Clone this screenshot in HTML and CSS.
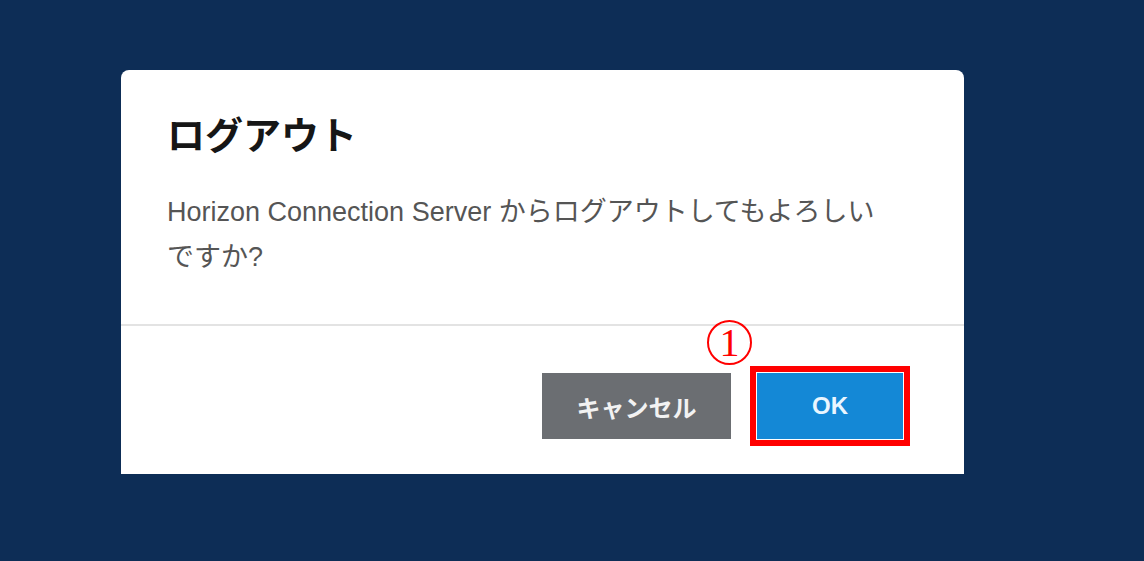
FILE: index.html
```html
<!DOCTYPE html>
<html lang="ja">
<head>
  <meta charset="UTF-8">
  <meta name="viewport" content="width=device-width, initial-scale=1.0">
  <title>ログアウト</title>
  <link rel="stylesheet" href="styles.css">
</head>
<body>

  <!-- Logout dialog -->
  <div class="dialog">
    <div class="dialog-body">
      <h2 class="dialog-title">ログアウト</h2>
      <p class="dialog-text">Horizon Connection Server からログアウトしてもよろしいですか?</p>
    </div>

    <div class="dialog-footer">
      <button class="btn btn-cancel">キャンセル</button>
      <div class="btn-wrap">
        <!-- step marker -->
        <span class="step-mark">1</span>
        <button class="btn btn-ok">OK</button>
      </div>
    </div>
  </div>

</body>
</html>
```

FILE: styles.css
```css
body {
  margin: 0;
  padding: 0;
  background-color: #0d2d56;
  font-family: 'Liberation Sans', Arial, 'Noto Sans CJK JP', sans-serif;
}

.dialog {
  width: 843px;
  margin: 70px 0 0 121px;
  background: #ffffff;
  border-radius: 8px 8px 0 0;
}

.dialog-body {
  padding: 40px 46px 44px 46px;
  border-bottom: 2px solid #e3e3e3;
}

.dialog-title {
  margin: 0;
  font-family: 'Noto Sans CJK JP', sans-serif;
  font-size: 38px;
  font-weight: 700;
  line-height: 46px;
  color: #161616;
}

.dialog-text {
  margin: 34px 0 0 0;
  width: 722px;
  font-size: 27px;
  line-height: 45px;
  color: #555555;
}

.dialog-footer {
  display: flex;
  justify-content: flex-end;
  align-items: flex-start;
  gap: 26px;
  padding: 47px 61px 35px 0;
}

.btn {
  height: 66px;
  border: none;
  font-family: 'Liberation Sans', Arial, 'Noto Sans CJK JP', sans-serif;
  font-size: 24px;
  font-weight: 700;
  cursor: pointer;
}

.btn-cancel {
  width: 189px;
  background: #6b6e72;
  color: #f2f2f2;
}

.btn-wrap {
  position: relative;
}

.btn-ok {
  display: block;
  width: 146px;
  background: #1488d6;
  color: #eaf6ff;
  box-shadow: 0 0 0 1px #ffffff, 0 0 0 7px #ff0000;
}

.step-mark {
  position: absolute;
  left: -50px;
  top: -53px;
  width: 41px;
  height: 41px;
  border: 2px solid #ff0000;
  border-radius: 50%;
  color: #ff0000;
  font-family: 'Liberation Serif', serif;
  font-size: 40px;
  line-height: 41px;
  text-align: center;
}
```
